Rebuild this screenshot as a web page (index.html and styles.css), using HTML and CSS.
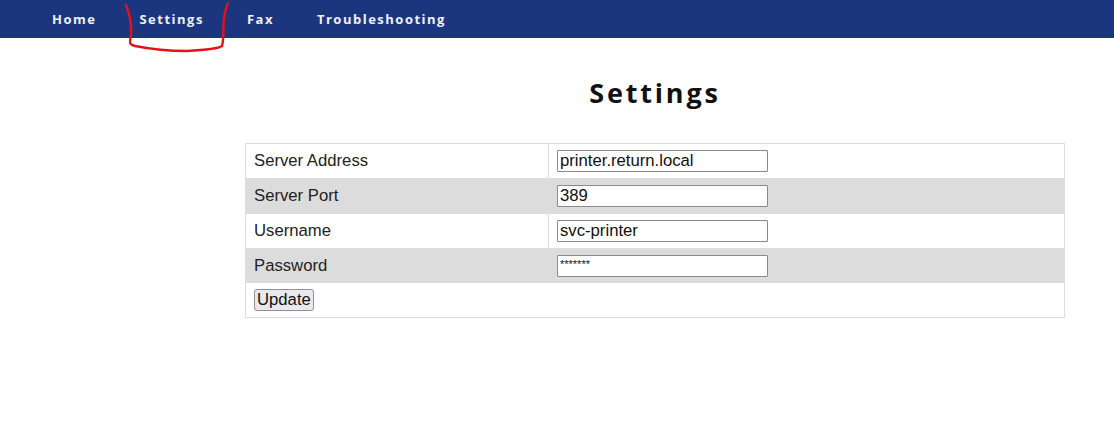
FILE: index.html
```html
<!DOCTYPE html>
<html>
<head>
<meta charset="utf-8">
<title>Settings</title>
<link rel="stylesheet" href="styles.css">
</head>
<body>
<nav class="topnav">
  <a class="nav-link" href="#">Home</a>
  <a class="nav-link" href="#">Settings</a>
  <a class="nav-link" href="#">Fax</a>
  <a class="nav-link" href="#">Troubleshooting</a>
</nav>
<svg class="scribble" width="260" height="60" viewBox="0 0 260 60">
  <path d="M126,5 C130,15 132,25 131,35 C130,42 128,44 135,46 C150,49 170,51 187,51 C205,50 218,49 222,46 C224,40 223,25 224,18 C225,12 226,7 228,3" fill="none" stroke="#e4121a" stroke-width="2.4" stroke-linecap="round" stroke-linejoin="round"/>
</svg>
<main class="content">
  <h1 class="title">Settings</h1>
  <table class="settings">
    <tr>
      <td class="label">Server Address</td>
      <td class="field"><input class="text" type="text" value="printer.return.local"></td>
    </tr>
    <tr>
      <td class="label">Server Port</td>
      <td class="field"><input class="text" type="text" value="389"></td>
    </tr>
    <tr>
      <td class="label">Username</td>
      <td class="field"><input class="text" type="text" value="svc-printer"></td>
    </tr>
    <tr>
      <td class="label">Password</td>
      <td class="field"><input class="text pass" type="text" value="*******"></td>
    </tr>
    <tr>
      <td class="label" colspan="2"><button class="btn" type="button">Update</button></td>
    </tr>
  </table>
</main>
</body>
</html>
```

FILE: styles.css
```css
html, body {
  margin: 0;
  padding: 0;
  background: #ffffff;
}

body {
  font-family: "Liberation Sans", Arial, sans-serif;
  position: relative;
}

.topnav {
  height: 38px;
  background: #1b367e;
  display: flex;
  align-items: center;
  padding-left: 52px;
  gap: 43px;
}

.nav-link {
  font-family: "Open Sans", sans-serif;
  font-weight: 700;
  font-size: 13px;
  letter-spacing: 1.5px;
  color: #eef1f8;
  text-decoration: none;
  line-height: 38px;
}

.scribble {
  position: absolute;
  left: 0;
  top: 0;
}

.content {
  margin-left: 245px;
  width: 820px;
}

.title {
  font-family: "Open Sans", sans-serif;
  font-weight: 700;
  font-size: 27px;
  letter-spacing: 2.8px;
  text-align: center;
  color: #111;
  margin: 0;
  padding-top: 36px;
  height: 105px;
  box-sizing: border-box;
}

.settings {
  width: 820px;
  border-collapse: collapse;
  border: 1px solid #dddddd;
  font-size: 16.7px;
  color: #222;
}

.settings td {
  border: 1px solid #dddddd;
  padding: 6px 8px;
  vertical-align: middle;
}

.settings tr:nth-child(even) {
  background: #dcdcdc;
}

.settings tr:nth-child(4) td {
  padding-bottom: 5px;
}

.label {
  width: 286px;
}

.text {
  box-sizing: border-box;
  width: 211px;
  height: 22px;
  border: 1px solid #8a8a8a;
  border-radius: 1px;
  padding: 0 2px;
  font-family: "Liberation Sans", Arial, sans-serif;
  font-size: 16.7px;
  color: #111;
  background: #fff;
  display: block;
}

.pass {
  font-size: 11px;
  letter-spacing: 0;
  padding-bottom: 4px;
}

.btn {
  box-sizing: border-box;
  height: 22px;
  padding: 0 2px;
  font-family: "Liberation Sans", Arial, sans-serif;
  font-size: 16.7px;
  color: #111;
  background: #e9e9ed;
  border: 1px solid #8f8f9d;
  border-radius: 3px;
  display: block;
}
```
